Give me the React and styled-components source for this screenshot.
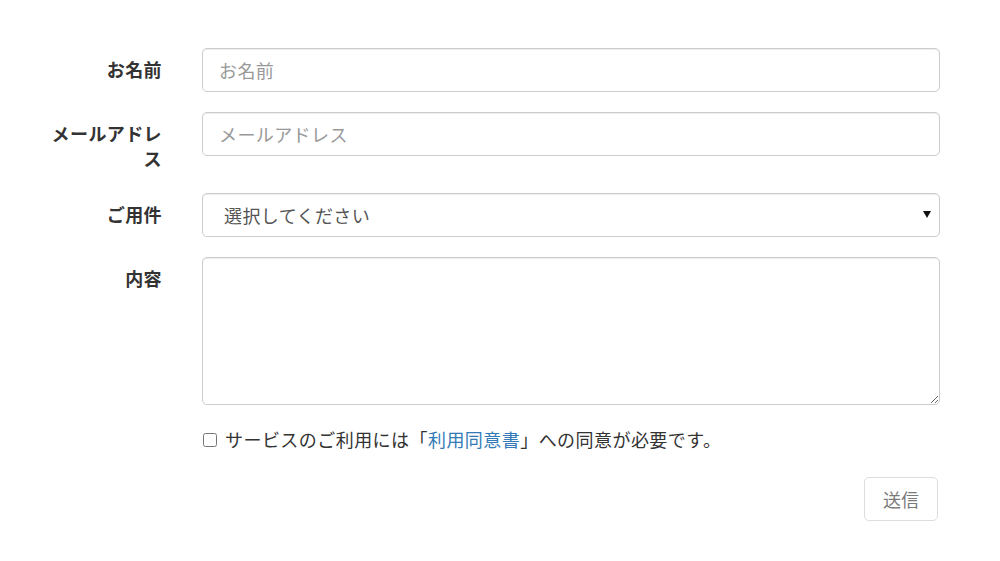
import React from "react";
import styled, { createGlobalStyle } from "styled-components";

const Global = createGlobalStyle`
  html, body { margin: 0; padding: 0; background: #fff; }
  body {
    font-family: "Noto Sans CJK JP", "Noto Sans", sans-serif;
    color: #333;
    font-size: 18px;
  }
  * { box-sizing: border-box; }
`;

const Form = styled.form`
  padding: 48px 0 0 48px;
  width: 1000px;
  display: grid;
  grid-template-columns: 114px 738px;
  column-gap: 40px;
  align-items: start;
`;

const Label = styled.label`
  grid-column: 1;
  text-align: right;
  font-weight: 700;
  font-size: 18px;
  line-height: 25px;
  letter-spacing: 0.4px;
  padding-top: 9px;
  margin-bottom: 22px;
  color: #333;
`;

const Field = styled.div`
  grid-column: 2;
  margin-bottom: 20px;
  position: relative;
`;

const controlBase = `
  display: block;
  width: 100%;
  border: 1px solid #ccc;
  border-radius: 5px;
  box-shadow: inset 0 1px 1px rgba(0,0,0,0.075);
  background: #fff;
  font-family: "Noto Sans CJK JP", "Noto Sans", sans-serif;
  font-size: 18px;
  letter-spacing: 0.4px;
  color: #555;
  outline: none;
  margin: 0;
`;

const Input = styled.input`
  ${controlBase}
  height: 44px;
  padding: 0 16px;
  &::placeholder { color: #999; }
`;

const Select = styled.select`
  ${controlBase}
  height: 44px;
  padding: 0 40px 0 21px;
  appearance: none;
  -webkit-appearance: none;
`;

const Arrow = styled.span`
  position: absolute;
  right: 9px;
  top: 18px;
  width: 0;
  height: 0;
  border-left: 4px solid transparent;
  border-right: 4px solid transparent;
  border-top: 7px solid #111;
  pointer-events: none;
`;

const TextArea = styled.textarea`
  ${controlBase}
  height: 148px;
  padding: 8px 16px;
  resize: vertical;
`;

const CheckRow = styled.div`
  grid-column: 2;
  display: flex;
  align-items: center;
  gap: 8px;
  padding-top: 2px;
  font-size: 18px;
  line-height: 25px;
  letter-spacing: 0.45px;
  color: #333;
  margin-bottom: 25px;
`;

const Check = styled.input`
  width: 14px;
  height: 14px;
  margin: 0 0 0 1px;
`;

const Link = styled.a`
  color: #337ab7;
  text-decoration: none;
`;

const Actions = styled.div`
  grid-column: 2;
  display: flex;
  justify-content: flex-end;
  padding-right: 2px;
`;

const Button = styled.button`
  width: 74px;
  height: 44px;
  border: 1px solid #ccc;
  border-radius: 5px;
  background: #fff;
  color: #333;
  opacity: 0.65;
  font-family: "Noto Sans CJK JP", "Noto Sans", sans-serif;
  font-size: 18px;
  cursor: not-allowed;
`;

export default function App() {
  return (
    <>
      <Global />
      <Form onSubmit={(e) => e.preventDefault()}>
        <Label>お名前</Label>
        <Field>
          <Input placeholder="お名前" />
        </Field>

        <Label>メールアドレス</Label>
        <Field>
          <Input placeholder="メールアドレス" />
        </Field>

        <Label>ご用件</Label>
        <Field>
          <Select defaultValue="">
            <option value="">選択してください</option>
          </Select>
          <Arrow />
        </Field>

        <Label>内容</Label>
        <Field>
          <TextArea />
        </Field>

        <CheckRow>
          <Check type="checkbox" />
          <span>
            サービスのご利用には「<Link href="#">利用同意書</Link>」への同意が必要です。
          </span>
        </CheckRow>

        <Actions>
          <Button type="submit" disabled>送信</Button>
        </Actions>
      </Form>
    </>
  );
}
